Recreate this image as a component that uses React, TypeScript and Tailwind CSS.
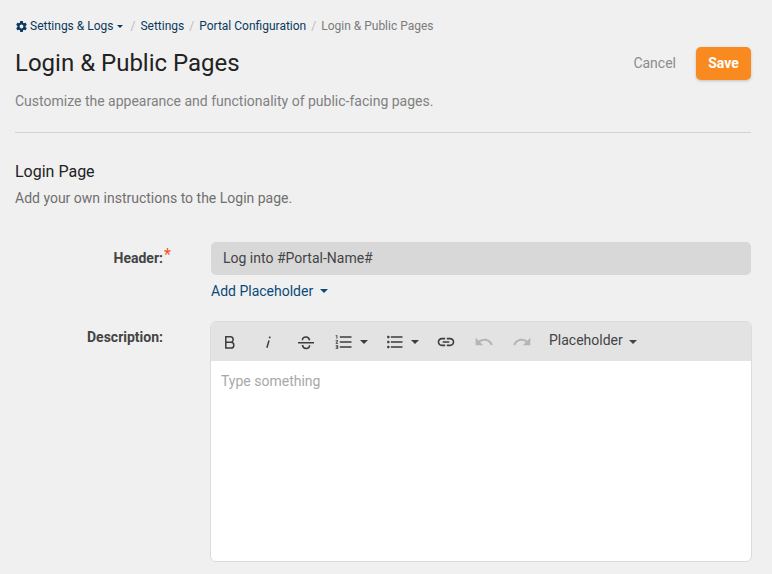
import React from "react";

const Caret = ({ small = false, className = "" }: { small?: boolean; className?: string }) => (
  <span
    className={
      "inline-block w-0 h-0 border-x-transparent border-t-current " +
      (small ? "border-x-[3px] border-t-[3px] " : "border-x-[4px] border-t-[4px] ") +
      className
    }
  />
);

const I = ({ d, className = "" }: { d: string; className?: string }) => (
  <svg viewBox="0 0 24 24" width="20" height="20" fill="currentColor" className={className}>
    <path d={d} />
  </svg>
);

const S = ({ children }: { children: React.ReactNode }) => (
  <svg viewBox="0 0 20 20" width="20" height="20" fill="none" stroke="currentColor" strokeWidth="1.5">
    {children}
  </svg>
);

const Tool = ({ children, className = "" }: { children: React.ReactNode; className?: string }) => (
  <div className={"flex items-center justify-center h-[38px] gap-[6px] " + className}>{children}</div>
);

export default function App() {
  return (
    <div className="w-[772px] h-[574px] overflow-hidden bg-[#f0f0f0] pl-[15px] pr-[21px] text-[14px] text-[#222] font-['Roboto',sans-serif]">
      <div className="flex items-center h-[16px] mt-[18px] text-[12px] text-[#0b3a5e]">
        <svg viewBox="0 0 24 24" width="13" height="13" fill="currentColor" className="mr-[2px]">
          <path d="M19.43 12.98c.04-.32.07-.64.07-.98s-.03-.66-.07-.98l2.11-1.65c.19-.15.24-.42.12-.64l-2-3.46c-.12-.22-.39-.3-.61-.22l-2.49 1c-.52-.4-1.08-.73-1.69-.98l-.38-2.65C14.46 2.18 14.25 2 14 2h-4c-.25 0-.46.18-.49.42l-.38 2.65c-.61.25-1.17.59-1.69.98l-2.49-1c-.23-.09-.49 0-.61.22l-2 3.46c-.13.22-.07.49.12.64l2.11 1.65c-.04.32-.07.65-.07.98s.03.66.07.98l-2.11 1.65c-.19.15-.24.42-.12.64l2 3.46c.12.22.39.3.61.22l2.49-1c.52.4 1.08.73 1.69.98l.38 2.65c.03.24.24.42.49.42h4c.25 0 .46-.18.49-.42l.38-2.65c.61-.25 1.17-.59 1.69-.98l2.49 1c.23.09.49 0 .61-.22l2-3.46c.12-.22.07-.49-.12-.64l-2.11-1.65zM12 15.5c-1.93 0-3.5-1.57-3.5-3.5s1.57-3.5 3.5-3.5 3.5 1.57 3.5 3.5-1.57 3.5-3.5 3.5z" />
        </svg>
        <span>Settings &amp; Logs</span>
        <Caret small className="ml-[4px]" />
        <span className="text-[#bbb] ml-[7px] mr-[5px]">/</span>
        <span>Settings</span>
        <span className="text-[#bbb] mx-[5px]">/</span>
        <span>Portal Configuration</span>
        <span className="text-[#bbb] mx-[5px]">/</span>
        <span className="text-[#7b7b7b]">Login &amp; Public Pages</span>
      </div>

      <div className="flex items-start justify-between mt-[11px]">
        <h1 className="text-[24px] leading-[36px] font-normal text-[#222]">Login &amp; Public Pages</h1>
        <div className="flex items-center mt-[2px]">
          <span className="text-[#8c8c8c] mr-[20px]">Cancel</span>
          <button className="w-[55px] h-[33px] rounded-[5px] bg-[#f98a1f] text-white font-bold shadow-[0_1px_3px_rgba(0,0,0,0.2)]">Save</button>
        </div>
      </div>

      <p className="mt-[10px] leading-[20px] text-[#808080]">Customize the appearance and functionality of public-facing pages.</p>
      <div className="mt-[21px] w-[736px] h-px bg-[#d3d3d3]" />

      <h2 className="mt-[29px] text-[16px] leading-[20px] font-normal text-[#222]">Login Page</h2>
      <p className="mt-[6px] leading-[20px] text-[#6f6f6f]">Add your own instructions to the Login page.</p>

      <div className="mt-[34px] flex">
        <div className="w-[149px] shrink-0 flex justify-end font-bold text-[#444] pt-[8px] leading-[16px]">
          Header:<span className="w-0 text-[#f4511e] font-normal text-[16px] leading-[10px] ml-px">*</span>
        </div>
        <div className="ml-[47px] w-[540px]">
          <div className="h-[33px] rounded-[5px] bg-[#d8d8d8] px-[12px] flex items-center text-[#444]">Log into #Portal-Name#</div>
          <div className="mt-[8px] h-[16px] flex items-center text-[#0b4a78]">
            Add Placeholder
            <Caret className="ml-[7px]" />
          </div>
        </div>
      </div>

      <div className="mt-[22px] flex">
        <div className="w-[148px] shrink-0 text-right font-bold text-[#444] pt-[8px] leading-[16px]">Description:</div>
        <div className="ml-[47px] w-[542px] shrink-0 h-[241px] rounded-[6px] border border-[#dcdcdc] bg-white overflow-hidden">
          <div className="h-[39px] bg-[#e3e3e3] flex items-center text-[#3d3d3d] pl-[9px]">
            <Tool className="w-[20px]">
              <S>
                <path d="M5.8 4.8H10.4A2.75 2.75 0 0 1 10.4 10.3H5.8V4.8ZM5.8 10.3H11A2.85 2.85 0 0 1 11 16H5.8V10.3Z" />
              </S>
            </Tool>
            <Tool className="w-[20px] ml-[18px]">
              <S>
                <path d="M11 8.5L8.9 15.8" />
                <path d="M11.9 4.6L11.5 6.2" strokeWidth="1.7" />
              </S>
            </Tool>
            <Tool className="w-[20px] ml-[18px]">
              <S>
                <path d="M2 10.7H18" />
                <path d="M13.6 8.4C13.2 6.2 11.8 5 10 5C8 5 6.4 6.2 6.4 8.2" />
                <path d="M6.4 13C6.8 15.2 8.2 16.4 10 16.4C12 16.4 13.6 15.2 13.6 13.2" />
              </S>
            </Tool>
            <Tool className="ml-[18px]">
              <I d="M2 17h2v.5H3v1h1v.5H2v1h3v-4H2v1zm1-9h1V4H2v1h1v3zm-1 3h1.8L2 13.1v.9h3v-1H3.2L5 10.9V10H2v1zm5-6v2h14V5H7zm0 14h14v-2H7v2zm0-6h14v-2H7v2z" />
              <Caret />
            </Tool>
            <Tool className="ml-[17px]">
              <I d="M4 10.5c-.83 0-1.5.67-1.5 1.5s.67 1.5 1.5 1.5 1.5-.67 1.5-1.5-.67-1.5-1.5-1.5zm0-6c-.83 0-1.5.67-1.5 1.5S3.17 7.5 4 7.5 5.5 6.83 5.5 6 4.83 4.5 4 4.5zm0 12c-.83 0-1.5.68-1.5 1.5s.68 1.5 1.5 1.5 1.5-.68 1.5-1.5-.67-1.5-1.5-1.5zM7 19h14v-2H7v2zm0-6h14v-2H7v2zm0-8v2h14V5H7z" />
              <Caret />
            </Tool>
            <Tool className="w-[20px] ml-[17px]">
              <I d="M3.9 12c0-1.71 1.39-3.1 3.1-3.1h4V7H7c-2.76 0-5 2.24-5 5s2.24 5 5 5h4v-1.9H7c-1.71 0-3.1-1.39-3.1-3.1zM8 13h8v-2H8v2zm9-6h-4v1.9h4c1.71 0 3.1 1.39 3.1 3.1s-1.39 3.1-3.1 3.1h-4V17h4c2.76 0 5-2.24 5-5s-2.24-5-5-5z" />
            </Tool>
            <Tool className="w-[20px] ml-[18px] text-[#b5b5b5]">
              <I d="M12.5 8c-2.65 0-5.05.99-6.9 2.6L2 7v9h9l-3.62-3.62c1.39-1.16 3.16-1.88 5.12-1.88 3.54 0 6.55 2.31 7.6 5.5l2.37-.78C21.08 11.03 17.15 8 12.5 8z" />
            </Tool>
            <Tool className="w-[20px] ml-[18px] text-[#b5b5b5]">
              <I d="M18.4 10.6C16.55 8.99 14.15 8 11.5 8c-4.65 0-8.58 3.03-9.96 7.22L3.9 16c1.05-3.19 4.05-5.5 7.6-5.5 1.95 0 3.73.72 5.12 1.88L13 16h9V7l-3.6 3.6z" />
            </Tool>
            <div className="ml-[17px] flex items-center text-[#444] h-[38px]">
              <span className="mb-[2px]">Placeholder</span>
              <Caret className="ml-[6px]" />
            </div>
          </div>
          <div className="px-[10px] pt-[10px] leading-[20px] text-[#a8a8a8]">Type something</div>
        </div>
      </div>
    </div>
  );
}
